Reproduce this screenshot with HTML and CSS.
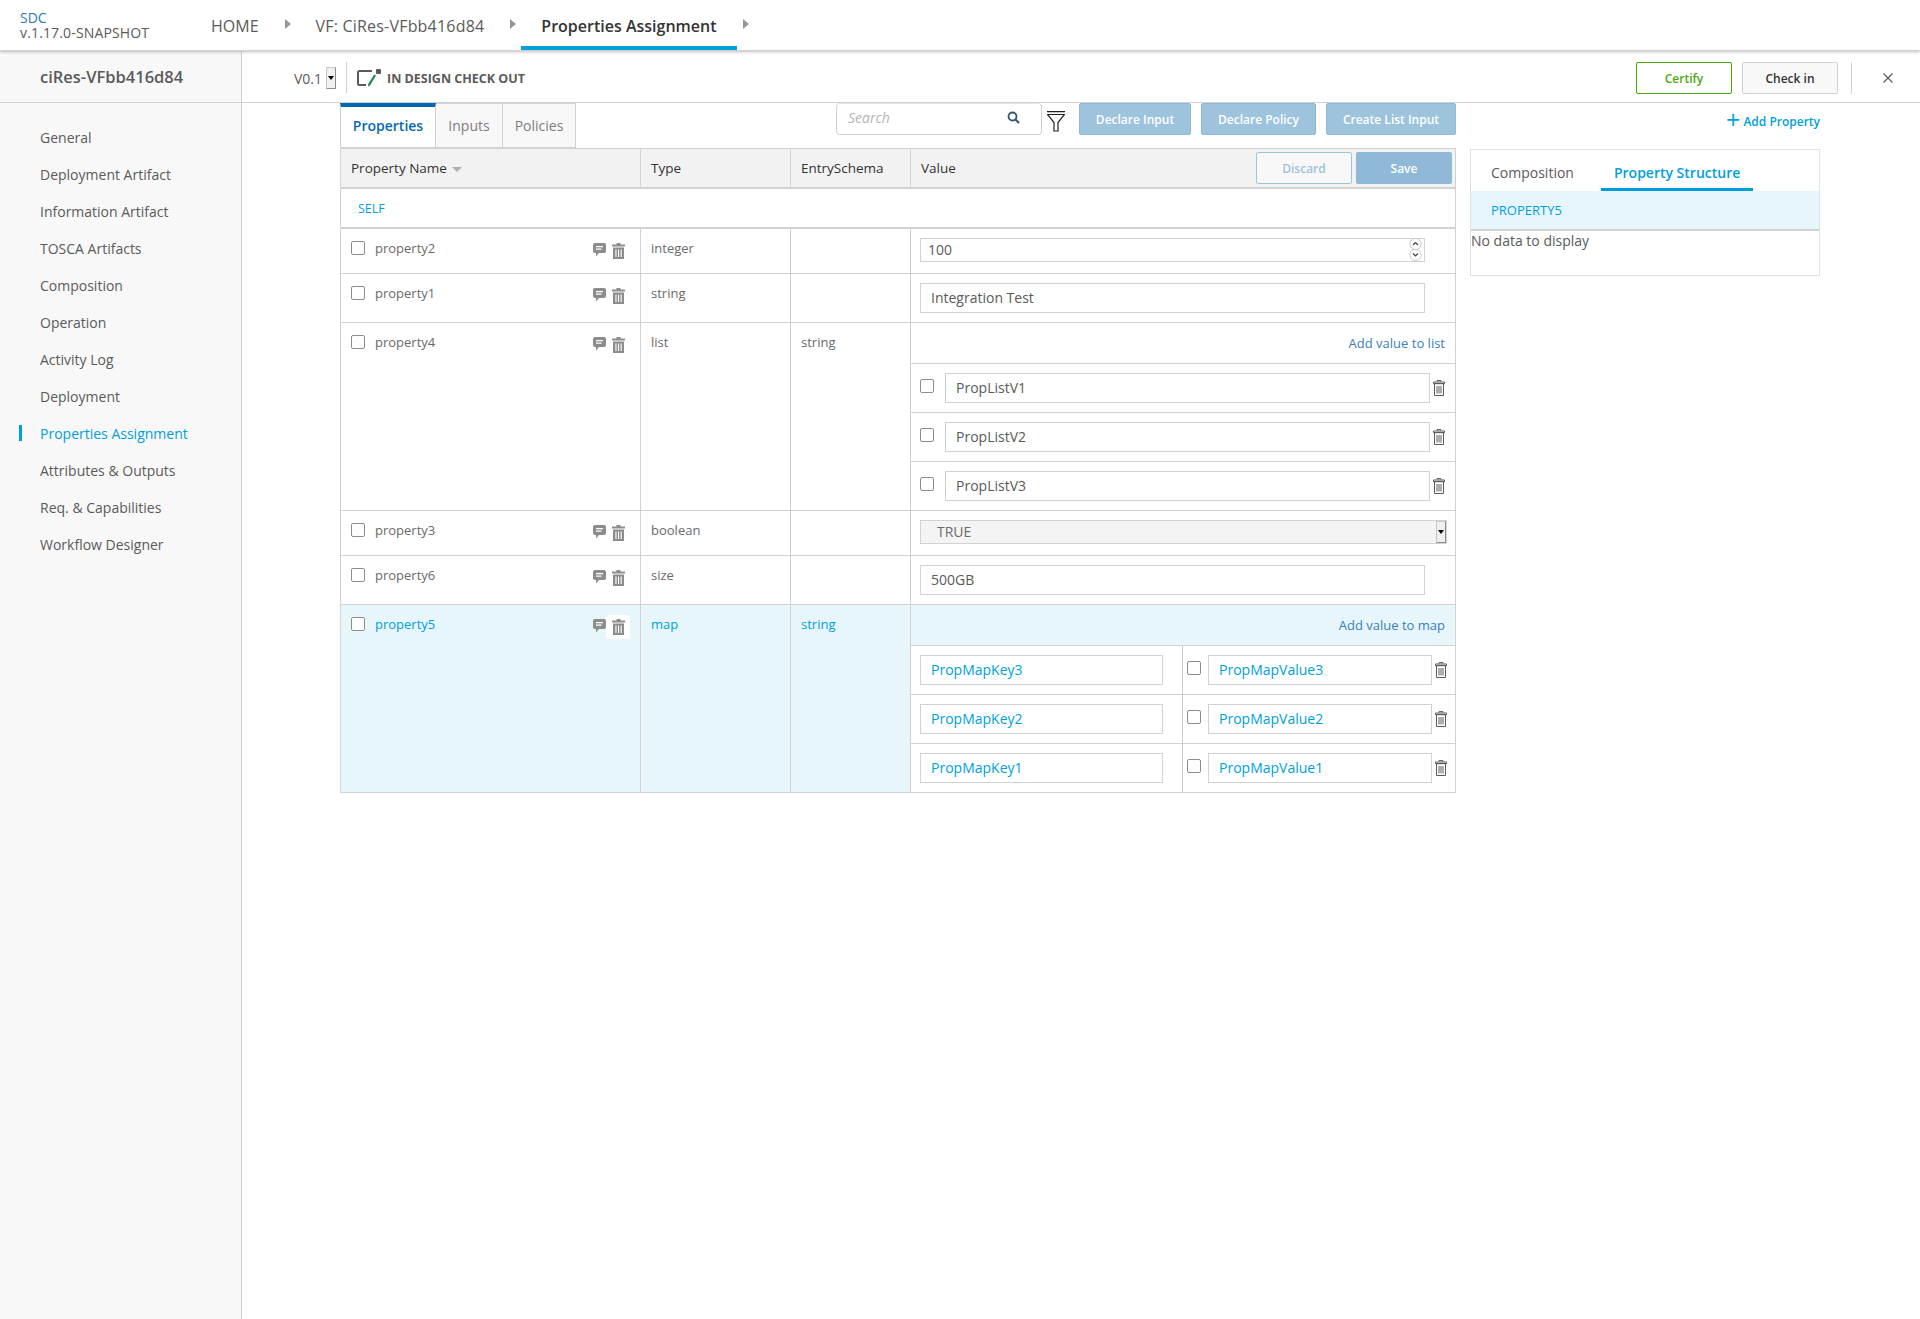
FILE: index.html
```html
<!DOCTYPE html>
<html>
  <head>
    <meta charset="UTF-8" />
    <title>SDC Properties Assignment</title>
    <link rel="stylesheet" href="styles.css">
  </head>

  <body>
    <svg class="sprite" aria-hidden="true">
      <symbol id="iconComment" viewBox="0 0 13 14">
        <path d="M2 0h9a2 2 0 0 1 2 2v6a2 2 0 0 1-2 2H6l-3 3.5V10H2a2 2 0 0 1-2-2V2a2 2 0 0 1 2-2z" fill="#8c8c8c" />
        <path d="M3 3h7v1.2H3zM3 5.6h5.5v1.2H3z" fill="#fff" />
      </symbol>
      <symbol id="iconTrash" viewBox="0 0 13 16">
        <path d="M4.5 0h4v1.5h4.5V3.5H0V1.5h4.5zM1 4.5h11V16H1z" fill="#8c8c8c" />
        <path d="M3.4 6.5h1.1v7.5H3.4zM6 6.5h1.1v7.5H6zM8.6 6.5h1.1v7.5H8.6z" fill="#fff" />
      </symbol>
      <symbol id="iconTrashLine" viewBox="0 0 12 16">
        <path d="M4 1.500V.6h4v.9M.5 2h11v1.600H.5zM1.500 3.600h9v11.900h-9z" fill="none" stroke="#5a5a5a" />
        <path d="M3.500 6h1v7.500h-1zM5.500 6h1v7.500h-1zM7.500 6h1v7.500h-1z" fill="#5a5a5a" />
      </symbol>
      <symbol id="iconCrumb" viewBox="0 0 6 10">
        <path d="M0 0l6 5-6 5z" fill="#959595" />
      </symbol>
    </svg>

    <header class="topBar">
      <div class="brand">
        <div class="brandName">SDC</div>
        <div class="brandVersion">v.1.17.0-SNAPSHOT</div>
      </div>
      <nav class="crumbs">
        <a class="crumb">HOME</a>
        <svg class="crumbArrow"><use href="#iconCrumb" /></svg>
        <a class="crumb crumbVf">VF: CiRes-VFbb416d84</a>
        <svg class="crumbArrow"><use href="#iconCrumb" /></svg>
        <a class="crumb crumbActive">Properties Assignment</a>
        <svg class="crumbArrow"><use href="#iconCrumb" /></svg>
      </nav>
    </header>

    <div class="shell">
      <aside class="sideBar">
        <div class="sideTitle">ciRes-VFbb416d84</div>
        <ul class="sideMenu">
          <li>General</li>
          <li>Deployment Artifact</li>
          <li>Information Artifact</li>
          <li>TOSCA Artifacts</li>
          <li>Composition</li>
          <li>Operation</li>
          <li>Activity Log</li>
          <li>Deployment</li>
          <li class="sideActive">Properties Assignment</li>
          <li>Attributes &amp; Outputs</li>
          <li>Req. &amp; Capabilities</li>
          <li>Workflow Designer</li>
        </ul>
      </aside>

      <main class="workspace">
        <div class="workBar">
          <span class="version">V0.1</span>
          <span class="miniSelect"><i></i></span>
          <span class="workDivider"></span>
          <svg class="stateIcon" viewBox="0 0 24 18">
            <path d="M15 2H2.500A1.500 1.500 0 0 0 1 3.500v11A1.500 1.500 0 0 0 2.500 16H9" fill="none" stroke="#5a5a5a" stroke-width="2" />
            <rect x="19" y="0" width="5" height="5" rx="1" fill="#5a5a5a" />
            <path d="M19 6.500l-6 10-2 1 .2-2.500 6-9.500z" fill="#1a8a4a" />
          </svg>
          <span class="stateText">IN DESIGN CHECK OUT</span>
          <span class="workActions">
            <button class="actionBtn certifyBtn">Certify</button>
            <button class="actionBtn">Check in</button>
            <span class="actionDivider"></span>
            <svg class="closeIcon" viewBox="0 0 10 10"><path d="M.5.5l9 9M9.500.5l-9 9" stroke="#5a5a5a" stroke-width="1.200" fill="none" /></svg>
          </span>
        </div>

        <div class="content">
          <section class="leftColumn">
            <div class="toolRow">
              <div class="tabs">
                <div class="tab tabActive">Properties</div>
                <div class="tab">Inputs</div>
                <div class="tab">Policies</div>
              </div>
              <div class="tools">
                <div class="searchBox">
                  <span>Search</span>
                  <svg viewBox="0 0 13 13"><circle cx="5.500" cy="5.500" r="4" fill="none" stroke="#33566e" stroke-width="1.800" /><path d="M8.500 8.500l3.500 3.500" stroke="#33566e" stroke-width="2" /></svg>
                </div>
                <svg class="filterIcon" viewBox="0 0 18 21">
                  <path d="M0 .7h18M.5 3.500h17l-6.500 8V20H7v-8.500z" fill="none" stroke="#222" stroke-width="1.200" />
                </svg>
                <button class="blueBtn btnInput">Declare Input</button>
                <button class="blueBtn btnPolicy">Declare Policy</button>
                <button class="blueBtn btnList">Create List Input</button>
              </div>
            </div>

            <div class="propTable">
              <div class="propRow headRow">
                <div class="cell headCell">Property Name <i class="sortArrow"></i></div>
                <div class="cell headCell">Type</div>
                <div class="cell headCell">EntrySchema</div>
                <div class="cell headCell headValue">
                  <span>Value</span>
                  <span class="headBtns">
                    <button class="discardBtn">Discard</button>
                    <button class="saveBtn">Save</button>
                  </span>
                </div>
              </div>
              <div class="selfRow">SELF</div>

              <div class="propRow rowShort">
                <div class="cell nameCell">
                  <input type="checkbox" />
                  <span class="propName">property2</span>
                  <svg class="commentIcon"><use href="#iconComment" /></svg>
                  <span class="trashBox"><svg class="trashIcon"><use href="#iconTrash" /></svg></span>
                </div>
                <div class="cell">integer</div>
                <div class="cell"></div>
                <div class="cell valueCell">
                  <div class="singleValue">
                    <div class="numberField">
                      <input class="field fieldSmall" type="text" value="100" />
                      <svg class="spinner" viewBox="0 0 15 23">
                        <rect x="2" y=".5" width="11" height="11" rx="5" fill="#fff" stroke="#c8c8c8" />
                        <rect x="2" y="11.500" width="11" height="11" rx="5" fill="#fff" stroke="#c8c8c8" />
                        <path d="M5 7l2.500-2.500L10 7M5 15.500L7.500 18l2.500-2.500" fill="none" stroke="#444" stroke-width="1.200" />
                      </svg>
                    </div>
                  </div>
                </div>
              </div>

              <div class="propRow rowTall">
                <div class="cell nameCell">
                  <input type="checkbox" />
                  <span class="propName">property1</span>
                  <svg class="commentIcon"><use href="#iconComment" /></svg>
                  <span class="trashBox"><svg class="trashIcon"><use href="#iconTrash" /></svg></span>
                </div>
                <div class="cell">string</div>
                <div class="cell"></div>
                <div class="cell valueCell">
                  <div class="singleValue"><input class="field fieldWide" type="text" value="Integration Test" /></div>
                </div>
              </div>

              <div class="propRow">
                <div class="cell nameCell">
                  <input type="checkbox" />
                  <span class="propName">property4</span>
                  <svg class="commentIcon"><use href="#iconComment" /></svg>
                  <span class="trashBox"><svg class="trashIcon"><use href="#iconTrash" /></svg></span>
                </div>
                <div class="cell">list</div>
                <div class="cell">string</div>
                <div class="cell valueCell">
                  <div class="addRow"><a>Add value to list</a></div>
                  <div class="subRow">
                    <input type="checkbox" />
                    <input class="field listField" type="text" value="PropListV1" />
                    <svg class="lineTrash"><use href="#iconTrashLine" /></svg>
                  </div>
                  <div class="subRow">
                    <input type="checkbox" />
                    <input class="field listField" type="text" value="PropListV2" />
                    <svg class="lineTrash"><use href="#iconTrashLine" /></svg>
                  </div>
                  <div class="subRow">
                    <input type="checkbox" />
                    <input class="field listField" type="text" value="PropListV3" />
                    <svg class="lineTrash"><use href="#iconTrashLine" /></svg>
                  </div>
                </div>
              </div>

              <div class="propRow rowShort">
                <div class="cell nameCell">
                  <input type="checkbox" />
                  <span class="propName">property3</span>
                  <svg class="commentIcon"><use href="#iconComment" /></svg>
                  <span class="trashBox"><svg class="trashIcon"><use href="#iconTrash" /></svg></span>
                </div>
                <div class="cell">boolean</div>
                <div class="cell"></div>
                <div class="cell valueCell">
                  <div class="singleValue">
                    <div class="selectField"><span>TRUE</span><span class="miniSelect"><i></i></span></div>
                  </div>
                </div>
              </div>

              <div class="propRow rowTall">
                <div class="cell nameCell">
                  <input type="checkbox" />
                  <span class="propName">property6</span>
                  <svg class="commentIcon"><use href="#iconComment" /></svg>
                  <span class="trashBox"><svg class="trashIcon"><use href="#iconTrash" /></svg></span>
                </div>
                <div class="cell">size</div>
                <div class="cell"></div>
                <div class="cell valueCell">
                  <div class="singleValue"><input class="field fieldWide" type="text" value="500GB" /></div>
                </div>
              </div>

              <div class="propRow rowSelected">
                <div class="cell nameCell">
                  <input type="checkbox" />
                  <span class="propName">property5</span>
                  <svg class="commentIcon"><use href="#iconComment" /></svg>
                  <span class="trashBox trashHover"><svg class="trashIcon"><use href="#iconTrash" /></svg></span>
                </div>
                <div class="cell">map</div>
                <div class="cell">string</div>
                <div class="cell valueCell">
                  <div class="addRow"><a>Add value to map</a></div>
                  <div class="subRow mapRow">
                    <div class="mapKey"><input class="field keyField" type="text" value="PropMapKey3" /></div>
                    <div class="mapValue">
                      <input type="checkbox" />
                      <input class="field valField" type="text" value="PropMapValue3" />
                      <svg class="lineTrash"><use href="#iconTrashLine" /></svg>
                    </div>
                  </div>
                  <div class="subRow mapRow">
                    <div class="mapKey"><input class="field keyField" type="text" value="PropMapKey2" /></div>
                    <div class="mapValue">
                      <input type="checkbox" />
                      <input class="field valField" type="text" value="PropMapValue2" />
                      <svg class="lineTrash"><use href="#iconTrashLine" /></svg>
                    </div>
                  </div>
                  <div class="subRow mapRow">
                    <div class="mapKey"><input class="field keyField" type="text" value="PropMapKey1" /></div>
                    <div class="mapValue">
                      <input type="checkbox" />
                      <input class="field valField" type="text" value="PropMapValue1" />
                      <svg class="lineTrash"><use href="#iconTrashLine" /></svg>
                    </div>
                  </div>
                </div>
              </div>
            </div>
          </section>

          <section class="rightColumn">
            <div class="addProperty"><span class="plus">+</span> Add Property</div>
            <div class="structurePanel">
              <div class="panelTabs">
                <div class="panelTab">Composition</div>
                <div class="panelTab panelTabActive">Property Structure</div>
              </div>
              <div class="panelHead">PROPERTY5</div>
              <div class="panelBody">No data to display</div>
            </div>
          </section>
        </div>
      </main>
    </div>
  </body>
</html>
```

FILE: styles.css
```css
* {
  box-sizing: border-box;
}

body {
  margin: 0;
  min-height: 1319px;
  font-family: "Open Sans", sans-serif;
  font-size: 13px;
  color: #5a5a5a;
  background-color: #fff;
}

button,
input {
  font-family: "Open Sans", sans-serif;
}

.sprite {
  display: none;
}

/* top bar */
.topBar {
  display: flex;
  height: 51px;
  border-bottom: 1px solid #d2d2d2;
  box-shadow: 0 1px 3px rgba(0, 0, 0, 0.25);
  position: relative;
}

.brand {
  width: 191px;
  padding: 10px 0 0 20px;
  font-size: 14px;
  line-height: 15px;
}

.brandName {
  color: #2a7ab8;
}

.brandVersion {
  letter-spacing: 0.15px;
}

.crumbs {
  display: flex;
  align-items: flex-start;
}

.crumb {
  height: 50px;
  padding: 0 20px;
  font-size: 16px;
  line-height: 52px;
  color: #5a5a5a;
}

.crumbVf {
  letter-spacing: 0.2px;
}

.crumbActive {
  color: #333;
  font-weight: 600;
  border-bottom: 4px solid #009fdb;
}

.crumbArrow {
  width: 6px;
  height: 10px;
  margin: 19px 5px 0 6px;
}

/* left side menu */
.shell {
  display: flex;
  min-height: 1268px;
}

.sideBar {
  width: 242px;
  flex-shrink: 0;
  background-color: #f8f8f8;
  border-right: 1px solid #d2d2d2;
}

.sideTitle {
  height: 52px;
  padding-left: 40px;
  font-size: 16.5px;
  font-weight: 600;
  line-height: 52px;
  border-bottom: 1px solid #d2d2d2;
}

.sideMenu {
  list-style: none;
  margin: 0;
  padding: 16px 0 0 40px;
  font-size: 14px;
}

.sideMenu li {
  height: 37px;
  line-height: 37px;
  position: relative;
}

.sideActive {
  color: #009fdb;
}

.sideActive:before {
  content: "";
  position: absolute;
  left: -21px;
  top: 10px;
  width: 3px;
  height: 16px;
  background-color: #009fdb;
}

/* version and state bar */
.workBar {
  display: flex;
  align-items: center;
  height: 52px;
  padding: 2px 0 0 52px;
  border-bottom: 1px solid #d2d2d2;
}

.workspace {
  flex: 1;
}

.version {
  width: 32px;
  padding-top: 2px;
  font-size: 14px;
}

.miniSelect {
  display: flex;
  align-items: center;
  justify-content: center;
  width: 10px;
  height: 22px;
  background-color: #f0f0f0;
  border: 1px solid #c8c8c8;
  border-right-color: #8c8c8c;
  border-bottom-color: #8c8c8c;
}

.miniSelect i {
  border: 3px solid transparent;
  border-top: 4px solid #000;
  border-bottom: 0;
}

.workDivider {
  width: 1px;
  height: 31px;
  margin: 0 10px 0 10px;
  background-color: #d2d2d2;
}

.stateIcon {
  width: 24px;
  height: 18px;
}

.stateText {
  margin-left: 6px;
  padding-top: 2px;
  font-size: 12.5px;
  font-weight: 700;
}

.workActions {
  display: flex;
  align-items: center;
  margin-left: auto;
}

.actionBtn {
  width: 96px;
  height: 32px;
  margin-right: 10px;
  padding: 2px 0 0;
  font-size: 12px;
  font-weight: 600;
  color: #333;
  background-color: #f8f8f8;
  border: 1px solid #d2d2d2;
  border-radius: 2px;
}

.certifyBtn {
  color: #4ca90c;
  background-color: #fff;
  border-color: #4ca90c;
}

.actionDivider {
  width: 1px;
  height: 32px;
  margin: 0 31px 0 3px;
  background-color: #d2d2d2;
}

.closeIcon {
  width: 10px;
  height: 10px;
  margin-right: 27px;
}

/* main content */
.content {
  display: flex;
  padding-left: 98px;
}

.leftColumn {
  width: 1116px;
}

.toolRow {
  display: flex;
  justify-content: space-between;
  height: 45px;
}

.tabs {
  display: flex;
}

.tab {
  width: 67px;
  height: 45px;
  font-size: 14px;
  line-height: 44px;
  text-align: center;
  color: #7d7d7d;
  background-color: #f8f8f8;
  border: 1px solid #d2d2d2;
  border-left: 0;
}

.tab:last-child {
  width: 73px;
}

.tabActive {
  width: 96px;
  color: #0568ae;
  font-weight: 600;
  background-color: #fff;
  border-left: 1px solid #d2d2d2;
  border-top: 4px solid #0568ae;
  line-height: 38px;
}

.tools {
  display: flex;
  align-items: flex-start;
}

.searchBox {
  display: flex;
  align-items: center;
  justify-content: space-between;
  width: 206px;
  height: 32px;
  padding: 0 21px 4px 11px;
  font-size: 14px;
  font-style: italic;
  color: #b4b4b4;
  border: 1px solid #d2d2d2;
  border-top-color: #e4e4e4;
  border-radius: 4px;
}

.searchBox svg {
  width: 13px;
  height: 13px;
}

.filterIcon {
  width: 18px;
  height: 21px;
  margin: 8px 0 0 5px;
}

.blueBtn {
  height: 32px;
  font-size: 12px;
  font-weight: 600;
  color: #fff;
  background-color: #9dc3dd;
  border: 1px solid #8fb9d6;
  border-radius: 2px;
  padding: 0;
}

.btnInput {
  width: 112px;
  margin-left: 14px;
}

.btnPolicy {
  width: 115px;
  margin-left: 10px;
}

.btnList {
  width: 130px;
  margin-left: 10px;
}

/* properties table */
.propTable {
  border: 1px solid #d2d2d2;
  border-bottom: 0;
}

.propRow {
  display: grid;
  grid-template-columns: 300px 150px 120px 1fr;
  border-bottom: 1px solid #d2d2d2;
}

.rowShort {
  min-height: 45px;
}

.rowTall {
  min-height: 49px;
}

.cell {
  padding: 10px 10px 0;
  line-height: 18px;
  color: #6a6a6a;
  border-right: 1px solid #d2d2d2;
}

.cell:last-child {
  border-right: 0;
}

.headRow {
  height: 40px;
  background-color: #f2f2f2;
  border-bottom-width: 2px;
}

.headCell {
  padding-top: 0;
  font-size: 13.5px;
  font-weight: 500;
  color: #333;
  line-height: 38px;
}

.sortArrow {
  display: inline-block;
  margin-left: 2px;
  border: 5px solid transparent;
  border-top: 5px solid #b0b0b0;
  border-bottom: 0;
  vertical-align: 1px;
}

.headValue {
  display: flex;
  justify-content: space-between;
  padding-right: 3px;
}

.headBtns {
  display: flex;
  gap: 4px;
  padding-top: 3px;
}

.discardBtn,
.saveBtn {
  width: 96px;
  height: 32px;
  padding: 0;
  font-size: 12px;
  font-weight: 600;
  border-radius: 2px;
}

.discardBtn {
  color: #9dc3dd;
  background-color: #f8f8f8;
  border: 1px solid #9dc3dd;
}

.saveBtn {
  color: #fff;
  background-color: #8fb9d6;
  border: 1px solid #8fb9d6;
}

.selfRow {
  height: 40px;
  padding-left: 17px;
  font-size: 12.5px;
  line-height: 39px;
  color: #009fdb;
  border-bottom: 2px solid #d2d2d2;
}

.nameCell {
  display: flex;
  align-items: flex-start;
  padding: 10px 10px 0;
}

input[type="checkbox"] {
  appearance: none;
  flex-shrink: 0;
  width: 14px;
  height: 14px;
  margin: 2px 0 0;
  background-color: #fff;
  border: 1px solid #8c8c8c;
  border-radius: 2px;
}

.propName {
  margin-left: 10px;
}

.commentIcon {
  width: 13px;
  height: 14px;
  margin: 4px 0 0 auto;
}

.trashBox {
  display: flex;
  justify-content: center;
  width: 24px;
  height: 24px;
  padding-top: 4px;
  border-radius: 3px;
}

.trashHover {
  background-color: #fff;
}

.trashIcon {
  width: 13px;
  height: 16px;
}

.valueCell {
  padding: 0;
}

.singleValue {
  padding: 9px 0 0 9px;
}

.field {
  display: block;
  height: 30px;
  padding: 0 8px 2px;
  font-size: 14px;
  color: #5a5a5a;
  background-color: #fff;
  border: 1px solid #d2d2d2;
  border-radius: 0;
  outline: 0;
}

.fieldWide {
  width: 505px;
  padding-left: 10px;
}

.numberField {
  position: relative;
  width: 505px;
}

.fieldSmall {
  width: 100%;
  height: 24px;
  padding-left: 7px;
}

.spinner {
  position: absolute;
  right: 2px;
  top: 0;
  width: 15px;
  height: 23px;
}

.selectField {
  display: flex;
  align-items: center;
  justify-content: space-between;
  width: 527px;
  height: 24px;
  padding-left: 16px;
  font-size: 14px;
  background-color: #f4f4f4;
  border: 1px solid #d2d2d2;
}

.addRow {
  height: 41px;
  padding-right: 10px;
  line-height: 40px;
  text-align: right;
  border-bottom: 1px solid #d2d2d2;
}

.addRow a {
  color: #3a7fba;
}

.subRow {
  display: flex;
  align-items: flex-start;
  height: 49px;
  padding: 9px 0 0 9px;
  border-bottom: 1px solid #d2d2d2;
}

.subRow input[type="checkbox"] {
  margin-top: 6px;
}

.subRow:last-child {
  height: 48px;
  border-bottom: 0;
}

.listField {
  width: 485px;
  margin-left: 11px;
  padding-left: 10px;
}

.lineTrash {
  width: 12px;
  height: 16px;
  margin: 7px 0 0 3px;
}

.mapRow {
  padding: 0;
}

.mapKey {
  width: 272px;
  height: 100%;
  padding: 9px 0 0 9px;
  border-right: 1px solid #d2d2d2;
}

.keyField {
  width: 243px;
  padding-left: 10px;
}

.mapValue {
  display: flex;
  align-items: flex-start;
  padding: 9px 0 0 4px;
}

.valField {
  width: 224px;
  margin-left: 7px;
  padding-left: 10px;
}

.rowSelected {
  background-color: #e6f6fb;
}

.rowSelected .cell {
  color: #009fdb;
}

.rowSelected .valueCell {
  background-color: #fff;
}

.rowSelected .addRow {
  background-color: #e6f6fb;
}

.rowSelected .field {
  color: #009fdb;
}

/* property structure panel */
.rightColumn {
  width: 350px;
  margin-left: 14px;
}

.addProperty {
  height: 46px;
  padding-top: 6px;
  line-height: 20px;
  font-size: 12px;
  font-weight: 600;
  text-align: right;
  color: #009fdb;
}

.plus {
  font-size: 25px;
  font-weight: 500;
  line-height: 20px;
  vertical-align: -3px;
}

.structurePanel {
  height: 127px;
  border: 1px solid #e0e0e0;
}

.panelTabs {
  display: flex;
  height: 41px;
  padding-left: 20px;
  font-size: 14px;
  line-height: 45px;
}

.panelTab {
  margin-right: 30px;
}

.panelTabActive {
  margin-left: -3px;
  padding: 0 13px;
  font-weight: 600;
  color: #009fdb;
  border-bottom: 3px solid #009fdb;
}

.panelHead {
  height: 40px;
  padding-left: 20px;
  font-size: 13px;
  line-height: 39px;
  color: #009fdb;
  background-color: #e6f6fb;
  border-bottom: 2px solid #d2d2d2;
}

.panelBody {
  font-size: 14px;
  line-height: 20px;
}
```
